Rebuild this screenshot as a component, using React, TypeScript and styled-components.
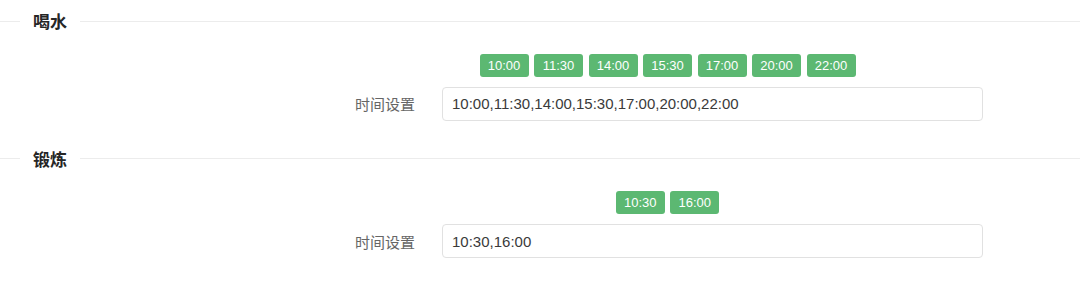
import styled, { createGlobalStyle } from 'styled-components'

const GlobalStyle = createGlobalStyle`
  body {
    margin: 0;
    background: #ffffff;
    font-family: 'Liberation Sans', 'Noto Sans CJK SC', sans-serif;
  }
`

const Page = styled.div`
  width: 1080px;
  display: flex;
  flex-direction: column;
`

const Section = styled.section`
  display: flex;
  flex-direction: column;
  padding-bottom: 17px;
`

const Divider = styled.div`
  display: flex;
  align-items: center;
  height: 42px;
  &:before {
    content: '';
    width: 20px;
    height: 1px;
    background: #ececec;
  }
  &:after {
    content: '';
    flex: 1;
    height: 1px;
    background: #ececec;
  }
`

const Title = styled.span`
  padding: 0 13px;
  font-family: 'Noto Sans CJK SC', sans-serif;
  font-size: 17px;
  font-weight: 700;
  line-height: 22px;
  color: #262626;
`

const Body = styled.div`
  margin-left: 352px;
  width: 631px;
  display: flex;
  flex-direction: column;
`

const TagRow = styled.div`
  display: flex;
  justify-content: center;
  gap: 5.5px;
  margin-top: 11.5px;
`

const Tag = styled.span`
  display: inline-flex;
  align-items: center;
  justify-content: center;
  width: 49px;
  height: 23px;
  border-radius: 3px;
  background: #5cb872;
  color: #ffffff;
  font-size: 13px;
`

const FormRow = styled.div`
  display: flex;
  align-items: center;
  margin-top: 10px;
`

const Label = styled.label`
  width: 90px;
  padding-right: 27px;
  box-sizing: border-box;
  text-align: right;
  font-family: 'Noto Sans CJK SC', sans-serif;
  font-size: 15px;
  color: #666666;
`

const Input = styled.input`
  flex: 1;
  height: 34px;
  box-sizing: border-box;
  padding: 0 9px;
  border: 1px solid #e1e1e1;
  border-radius: 4px;
  font-family: 'Liberation Sans', sans-serif;
  font-size: 15px;
  color: #3a3a3a;
  outline: none;
`

const sections = [
  { title: '喝水', times: ['10:00', '11:30', '14:00', '15:30', '17:00', '20:00', '22:00'] },
  { title: '锻炼', times: ['10:30', '16:00'] },
]

export default function App() {
  return (
    <Page>
      <GlobalStyle />
      {sections.map((s) => (
        <Section key={s.title}>
          <Divider>
            <Title>{s.title}</Title>
          </Divider>
          <Body>
            <TagRow>
              {s.times.map((t) => (
                <Tag key={t}>{t}</Tag>
              ))}
            </TagRow>
            <FormRow>
              <Label>时间设置</Label>
              <Input defaultValue={s.times.join(',')} />
            </FormRow>
          </Body>
        </Section>
      ))}
    </Page>
  )
}
